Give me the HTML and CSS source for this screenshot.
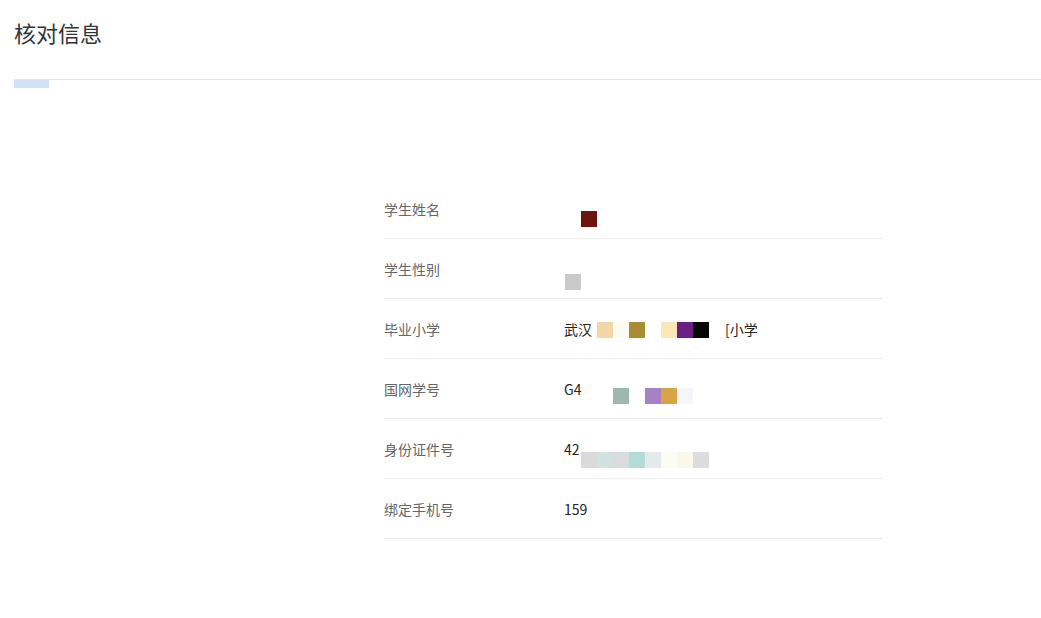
FILE: index.html
```html
<!DOCTYPE html>
<html lang="zh-CN">
<head>
<meta charset="utf-8">
<title>核对信息</title>
<link rel="stylesheet" href="styles.css">
</head>
<body>
<header class="header">
  <h1 class="title">核对信息</h1>
</header>
<div class="divider"></div>
<div class="tab-indicator"></div>

<section class="info">
  <div class="row">
    <div class="label">学生姓名</div>
    <div class="value">
      <span class="lead w17"></span>
      <span class="mosaic m1"><i style="background:#6a140c"></i></span>
    </div>
  </div>
  <div class="row">
    <div class="label">学生性别</div>
    <div class="value">
      <span class="lead w1"></span>
      <span class="mosaic m2"><i style="background:#c9c9c9"></i></span>
    </div>
  </div>
  <div class="row">
    <div class="label">毕业小学</div>
    <div class="value">
      <span class="lead w33">武汉</span>
      <span class="mosaic m3"><i style="background:#f2d6a6"></i><i style="background:#fcfaf3"></i><i style="background:#a98b33"></i><i style="background:#ffffff"></i><i style="background:#fbe6b8"></i><i style="background:#6b1f84"></i><i style="background:#060606"></i><i style="background:#ffffff"></i></span>
      <span class="tail">[小学</span>
    </div>
  </div>
  <div class="row">
    <div class="label">国网学号</div>
    <div class="value">
      <span class="lead w33">G4</span>
      <span class="mosaic m4"><i style="background:#ffffff"></i><i style="background:#9db8b0"></i><i style="background:#ffffff"></i><i style="background:#a880c4"></i><i style="background:#d8a445"></i><i style="background:#f4f6fa"></i></span>
    </div>
  </div>
  <div class="row">
    <div class="label">身份证件号</div>
    <div class="value">
      <span class="lead w17">42</span>
      <span class="mosaic m5"><i style="background:#dadada"></i><i style="background:#cfe2df"></i><i style="background:#d9dcdc"></i><i style="background:#b2dcd8"></i><i style="background:#e4e9ec"></i><i style="background:#fcfdf1"></i><i style="background:#fbf7e9"></i><i style="background:#dcdcdc"></i></span>
    </div>
  </div>
  <div class="row">
    <div class="label">绑定手机号</div>
    <div class="value">
      <span class="lead">159</span>
    </div>
  </div>
</section>
</body>
</html>
```

FILE: styles.css
```css
html, body {
  margin: 0;
  padding: 0;
  background: #ffffff;
}

body {
  font-family: "Noto Sans CJK SC", "Microsoft YaHei", sans-serif;
  color: #222222;
  width: 1041px;
  height: 618px;
  overflow: hidden;
}

.header {
  height: 79px;
  padding: 16px 14px 0;
  box-sizing: border-box;
}

.title {
  margin: 0;
  font-size: 22px;
  line-height: 32px;
  font-weight: 400;
  color: #333333;
}

.divider {
  margin-left: 14px;
  height: 0;
  border-top: 1px solid #e8e8e8;
}

.tab-indicator {
  margin-left: 14px;
  width: 35px;
  height: 8px;
  background: #d3e1f8;
}

.info {
  margin: 91px 0 0 384px;
  width: 498px;
}

.row {
  display: flex;
  align-items: center;
  height: 60px;
  box-sizing: border-box;
  border-bottom: 1px solid #ebebeb;
  font-size: 14px;
}

.label {
  width: 180px;
  flex: none;
  color: #666666;
}

.value {
  display: flex;
  align-items: center;
  height: 100%;
  color: #222222;
}

.lead {
  flex: none;
  white-space: nowrap;
  overflow: hidden;
}

.w1 { width: 1px; }
.w17 { width: 17px; }
.w33 { width: 33px; }

.mosaic {
  display: flex;
  align-self: flex-start;
}

.mosaic i {
  display: block;
  width: 16px;
  height: 16px;
}

.m1 { margin-top: 32px; }
.m2 { margin-top: 35px; }
.m3 { margin-top: 23px; }
.m4 { margin-top: 29px; }
.m5 { margin-top: 33px; }

.tail {
  white-space: nowrap;
}
```
